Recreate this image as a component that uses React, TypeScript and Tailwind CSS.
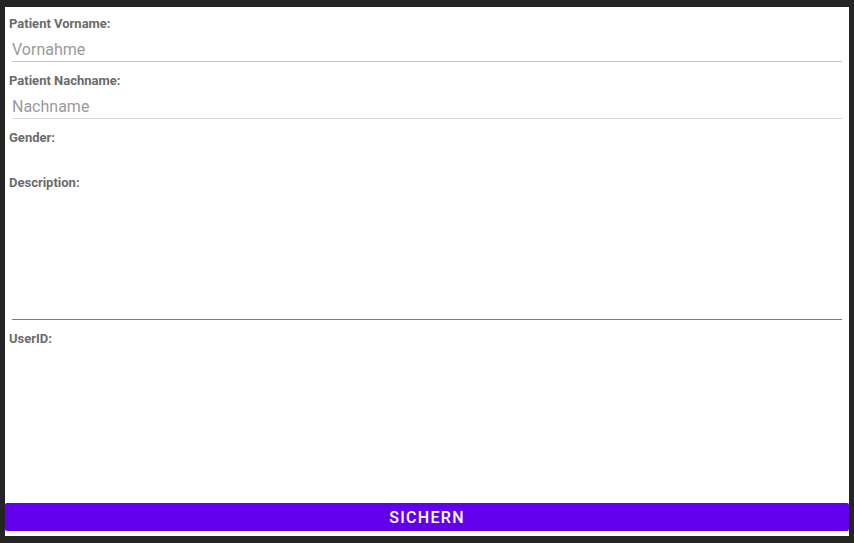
import React, { useState } from 'react';

const Label: React.FC<{ text: string; className?: string }> = ({ text, className }) => (
  <div className={`pl-[4px] h-[14px] text-[13px] leading-[14px] font-bold text-[#6b6b6b] ${className ?? ''}`}>
    {text}
  </div>
);

export default function App() {
  const [vorname, setVorname] = useState('');
  const [nachname, setNachname] = useState('');
  const [description, setDescription] = useState('');

  return (
    <div
      className="h-[543px] w-full bg-[#252526] pt-[7px] pb-[7px] px-[5px] flex"
      style={{ fontFamily: 'Roboto, "Noto Sans", sans-serif' }}
    >
      <div className="flex-1 bg-white flex flex-col">
        <Label text="Patient Vorname:" className="mt-[10px]" />
        <div className="mx-[7px] h-[31px] border-b border-[#c4c4c4] flex items-end pb-[2px]">
          <input
            value={vorname}
            onChange={(e) => setVorname(e.target.value)}
            placeholder="Vornahme"
            className="w-full text-[16px] leading-[19px] text-[#333] placeholder:text-[#9a9a9a] outline-none bg-transparent"
          />
        </div>

        <Label text="Patient Nachname:" className="mt-[12px]" />
        <div className="mx-[7px] h-[31px] border-b border-[#d6d6d6] flex items-end pb-[2px]">
          <input
            value={nachname}
            onChange={(e) => setNachname(e.target.value)}
            placeholder="Nachname"
            className="w-full text-[16px] leading-[19px] text-[#333] placeholder:text-[#9a9a9a] outline-none bg-transparent"
          />
        </div>

        <Label text="Gender:" className="mt-[12px]" />

        <Label text="Description:" className="mt-[31px]" />
        <div className="mx-[7px] h-[130px] border-b border-[#7a7a7a]">
          <textarea
            value={description}
            onChange={(e) => setDescription(e.target.value)}
            className="w-full h-full resize-none outline-none text-[16px] text-[#333] bg-transparent"
          />
        </div>

        <Label text="UserID:" className="mt-[12px]" />

        <div className="flex-1" />

        <button className="h-[28px] w-full bg-[#6200ee] text-white text-[16px] font-medium tracking-[1.3px] pt-[2px] mb-[5px] rounded-[2px]">
          SICHERN
        </button>
      </div>
    </div>
  );
}
